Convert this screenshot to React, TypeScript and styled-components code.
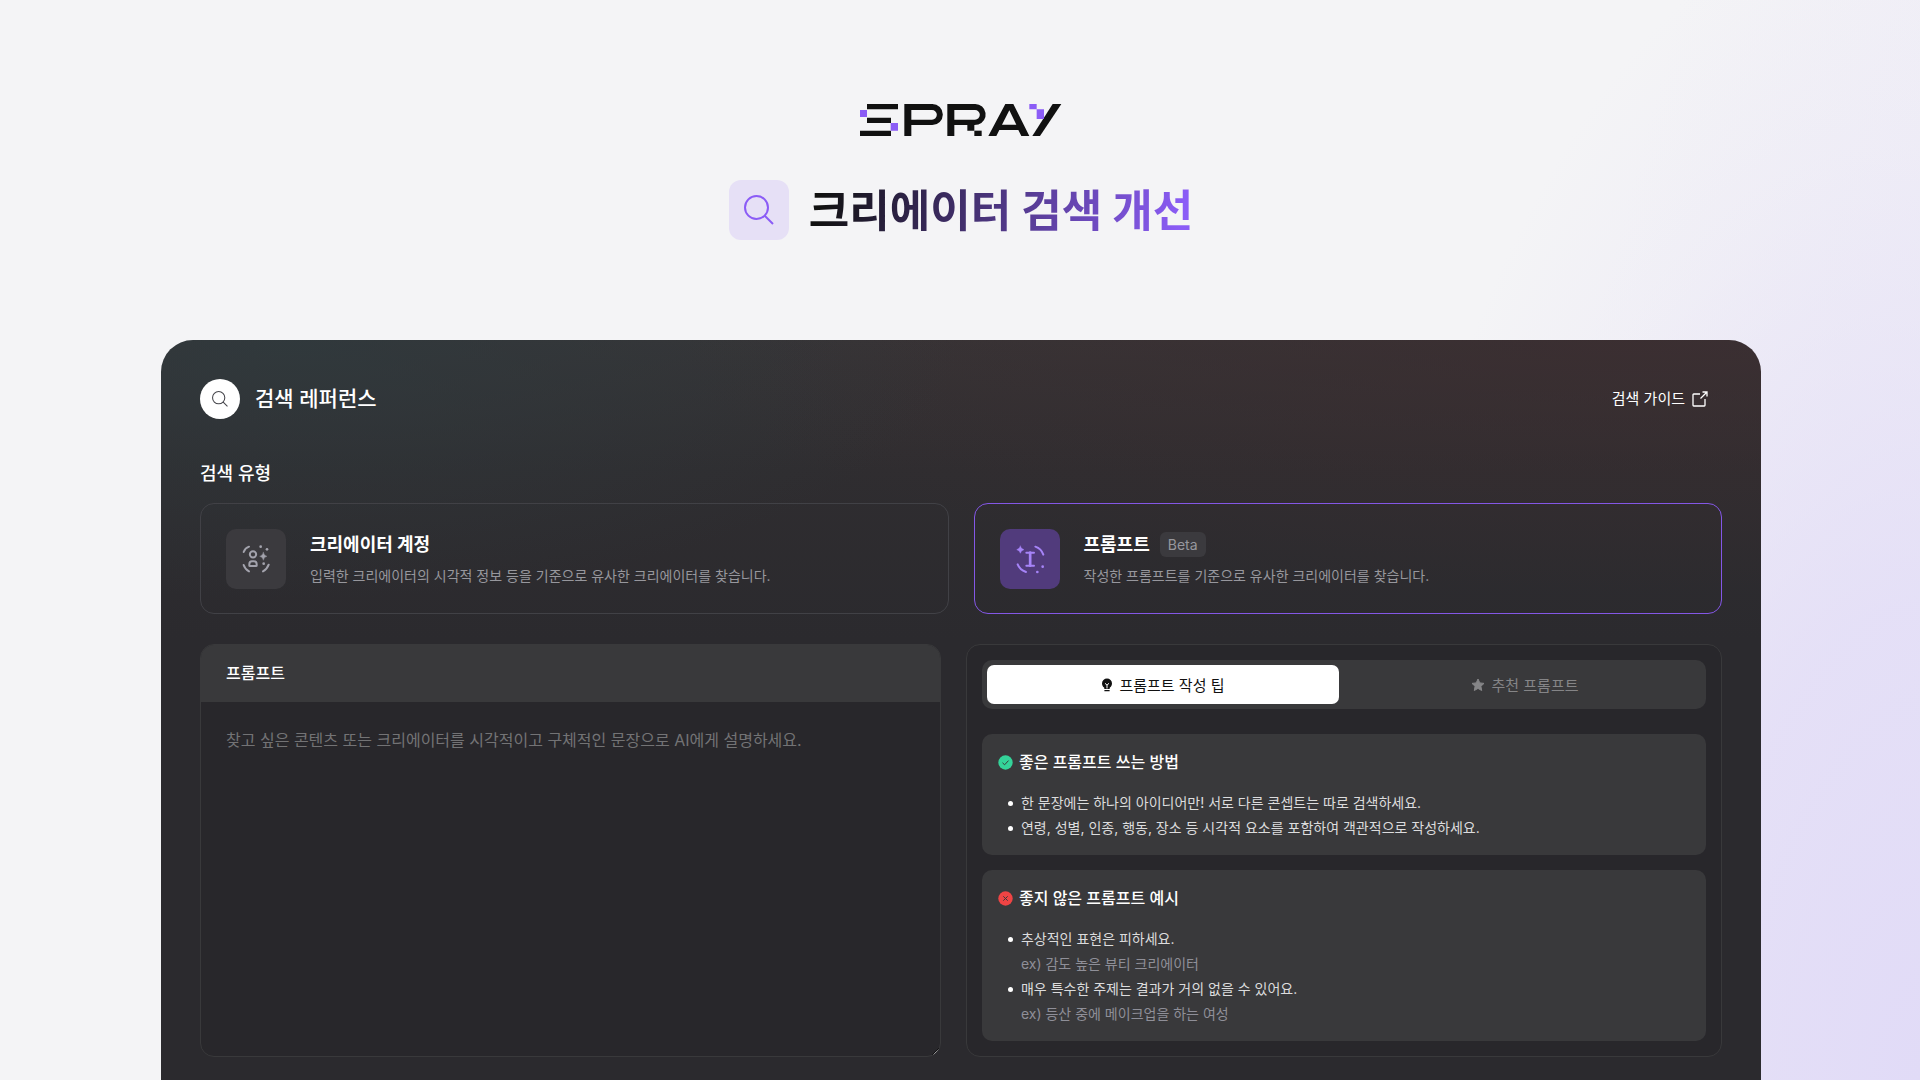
import React, { useState } from "react";
import styled, { createGlobalStyle, css } from "styled-components";

const GlobalStyle = createGlobalStyle`
  *, *::before, *::after { box-sizing: border-box; }
  body {
    margin: 0;
    font-family: Inter, "Noto Sans CJK KR", "Noto Sans", sans-serif;
    color: #fff;
    background: #f4f4f6;
  }
  h1, h2, h3, p, ul { margin: 0; padding: 0; }
  button, textarea { font: inherit; }
`;

const Page = styled.div`
  min-height: 100vh;
  max-height: 100vh;
  overflow: hidden;
  display: flex;
  flex-direction: column;
  padding: 104px 159px 0 161px;
  background:
    radial-gradient(ellipse 30% 110% at 100% 100%, #e1dbf7 0%, rgba(225, 219, 247, 0.75) 40%, rgba(225, 219, 247, 0.2) 78%, rgba(225, 219, 247, 0) 100%),
    linear-gradient(105deg, rgba(232, 227, 248, 0) 76%, rgba(232, 227, 248, 0.45) 100%),
    #f4f4f6;
`;

const Hero = styled.header`
  display: flex;
  flex-direction: column;
  align-items: center;
  gap: 44px;
  padding-bottom: 100px;
`;

const HeroRow = styled.div`
  display: flex;
  align-items: center;
  gap: 20px;
`;

const HeroIcon = styled.span`
  display: grid;
  place-items: center;
  width: 60px;
  height: 60px;
  border-radius: 12px;
  background: #e6e0f6;
  color: #8b5cf6;
`;

const HeroTitle = styled.h1`
  padding-bottom: 4px;
  font-family: "Noto Sans CJK KR", "Noto Sans", sans-serif;
  font-size: 44px;
  line-height: 56px;
  font-weight: 700;
  color: transparent;
  background: linear-gradient(100deg, #111 4%, #8b5cf6 96%);
  background-clip: text;
  -webkit-background-clip: text;
`;

const Card = styled.main`
  flex: 1 0 auto;
  padding: 39px 39px 24px;
  border-radius: 32px 32px 0 0;
  background:
    radial-gradient(ellipse 42% 260px at 8% 0, rgba(46, 58, 62, 0.75), rgba(43, 42, 46, 0)),
    radial-gradient(ellipse 60% 250px at 92% 0, rgba(60, 44, 47, 0.7), rgba(43, 42, 46, 0)),
    linear-gradient(180deg, #373436 0, #2f2d30 130px, #2b2a2e 300px);
`;

const CardHead = styled.div`
  display: flex;
  align-items: center;
  justify-content: space-between;
  height: 40px;
  padding-right: 14px;
`;

const CardTitle = styled.div`
  display: flex;
  align-items: center;
  gap: 15px;
`;

const RoundIcon = styled.span`
  display: grid;
  place-items: center;
  width: 40px;
  height: 40px;
  border-radius: 50%;
  background: #fff;
  color: #46464c;
`;

const H2 = styled.h2`
  font-size: 21px;
  line-height: 32px;
  font-weight: 500;
`;

const GuideLink = styled.a`
  display: flex;
  align-items: center;
  gap: 7px;
  color: #fff;
  font-size: 15px;
  line-height: 24px;
  text-decoration: none;
`;

const SectionLabel = styled.h3`
  margin-top: 40px;
  padding-bottom: 14px;
  font-size: 18px;
  line-height: 30px;
  font-weight: 500;
`;

const TypeGrid = styled.div`
  display: grid;
  grid-template-columns: 1fr 1fr;
  gap: 25px;
`;

const HiddenRadio = styled.input`
  appearance: none;
  position: absolute;
  opacity: 0;
`;

const TypeCard = styled.label<{ $active: boolean }>`
  display: flex;
  align-items: center;
  gap: 24px;
  min-height: 111px;
  padding: 24px 25px;
  border: 1px solid ${(p) => (p.$active ? "#8457e6" : "#414146")};
  border-radius: 14px;
  cursor: pointer;
`;

const TypeIcon = styled.span<{ $active: boolean }>`
  display: grid;
  place-items: center;
  width: 60px;
  height: 60px;
  border-radius: 10px;
  background: ${(p) => (p.$active ? "#513b7c" : "#3b3a3e")};
  color: ${(p) => (p.$active ? "#a684f8" : "#a3a3ad")};
`;

const TypeText = styled.span`
  display: flex;
  flex-direction: column;
  gap: 8px;
`;

const TypeTitle = styled.span`
  display: flex;
  align-items: center;
  gap: 10px;
  font-size: 18px;
  line-height: 26px;
  font-weight: 700;
`;

const TypeDesc = styled.span`
  font-size: 14px;
  line-height: 20px;
  color: #97979d;
`;

const Badge = styled.span`
  padding: 0 8px;
  border-radius: 6px;
  background: #3b3a3e;
  color: #97979d;
  font-size: 14px;
  line-height: 25px;
  font-weight: 400;
`;

const WorkGrid = styled.div`
  display: grid;
  grid-template-columns: 49fr 50fr;
  gap: 25px;
  margin-top: 30px;
`;

const panel = css`
  border: 1px solid #39393b;
  border-radius: 14px;
  background: #28272b;
`;

const Editor = styled.section`
  ${panel}
  display: flex;
  flex-direction: column;
  overflow: hidden;
`;

const EditorLabel = styled.label`
  padding: 16px 25px 17px;
  background: #39393b;
  font-size: 16px;
  line-height: 24px;
  font-weight: 500;
`;

const EditorArea = styled.textarea`
  flex: 1;
  display: block;
  width: 100%;
  padding: 24px 25px;
  border: 0;
  outline: 0;
  resize: vertical;
  background: transparent;
  color: #fff;
  color-scheme: dark;
  font-size: 16px;
  line-height: 28px;
  &::placeholder { color: #737375; opacity: 1; }
`;

const Tips = styled.section`
  ${panel}
  display: flex;
  flex-direction: column;
  gap: 15px;
  padding: 15px;
`;

const TabBar = styled.div`
  display: grid;
  grid-template-columns: 1fr 1fr;
  gap: 10px;
  margin-bottom: 10px;
  padding: 5px;
  border-radius: 10px;
  background: #39393b;
`;

const Tab = styled.button<{ $active: boolean }>`
  display: flex;
  align-items: center;
  justify-content: center;
  gap: 6px;
  height: 39px;
  padding: 0;
  border: 0;
  border-radius: 7px;
  background: ${(p) => (p.$active ? "#fff" : "transparent")};
  color: ${(p) => (p.$active ? "#111" : "#858587")};
  font-size: 15px;
  cursor: pointer;
`;

const TipBox = styled.article`
  padding: 16px 16px 15px;
  border-radius: 10px;
  background: #39393b;
`;

const TipHead = styled.h3`
  display: flex;
  align-items: center;
  gap: 6px;
  font-size: 16px;
  line-height: 25px;
  font-weight: 500;
`;

const TipList = styled.ul`
  margin-top: 15px;
  padding-left: 10px;
  list-style: none;
  font-size: 14px;
  line-height: 25px;
  color: #dcdcdd;
`;

const TipItem = styled.li`
  display: grid;
  grid-template-columns: 5px 1fr;
  column-gap: 8px;

  &::before {
    content: "";
    height: 5px;
    margin-top: 11px;
    border-radius: 50%;
    background: #fff;
  }
`;

const Example = styled.p`
  grid-column: 2;
  color: #8f8f98;
`;

const Logo = () => (
  <svg width="202" height="32" viewBox="0 0 606 96" role="img" aria-label="SPRAY">
    <g fill="#111">
      <path d="M21 0h93v16H21zM21 41h72v16H21zM0 80h93v16H0z" />
      <path fillRule="evenodd" d="M133 0h84a31.500 31.500 0 0 1 0 63h-63v33h-21zM154 18v29h62a14.500 14.500 0 0 0 0-29z" />
      <path fillRule="evenodd" d="M262 0h84a31.500 31.500 0 0 1 9 61.500l-12 1.500v17h-21V63h-39v33h-21zM283 18v29h62a14.500 14.500 0 0 0 0-29z" />
      <path d="M343 80h22v16h-22z" />
      <path fillRule="evenodd" d="M385 96 436 0h24l48 96h-24l-9-18h-57l-9 18zM448 19l-22 43h43z" />
      <path d="M578 0h26l-64 96h-23z" />
    </g>
    <path fill="#8b5cf6" d="M0 18h21v21H0zM92 57h22v23H92zM508 0h22v16h-22zM530 16h22v29h-22z" />
  </svg>
);

const SearchIcon = ({ size, stroke }: { size: number; stroke: number }) => (
  <svg width={size} height={size} viewBox="0 0 30 30" fill="none" stroke="currentColor" strokeWidth={stroke} aria-hidden="true">
    <circle cx="12.500" cy="12.500" r="11.500" />
    <path d="m20.500 20.500 8.500 8.500" />
  </svg>
);

const ExternalIcon = () => (
  <svg width="16" height="16" viewBox="0 0 16 16" fill="none" stroke="currentColor" strokeWidth="1.300" aria-hidden="true">
    <path d="M8 3H1.700a.7.7 0 0 0-.7.7v10.600c0 .4.300.7.7.7h10.600c.4 0 .7-.3.7-.7V8M10.500 1H15v4.500M15 1 8.500 7.500" />
  </svg>
);

const AccountIcon = () => (
  <svg width="30" height="30" viewBox="0 0 90 90" fill="none" stroke="currentColor" strokeWidth="6" strokeLinecap="round" aria-hidden="true">
    <circle cx="36" cy="31" r="9.500" />
    <path d="M25 65v-4q0-9 8-9h6q8 0 8 9v4q0 1-2 1H27q-2 0-2-1z" />
    <path d="M8 24Q12 12 24 8M8 63q4 13 16 19M83 62q-5 14-17 20" />
    <g fill="currentColor" stroke="none">
      <path d="M67 25q2 10 11 12-9 2-11 12-2-10-11-12 9-2 11-12z" stroke="currentColor" strokeWidth="1" />
      <circle cx="59" cy="8" r="4" />
      <circle cx="78" cy="16" r="4" />
      <circle cx="68" cy="59" r="4" />
    </g>
  </svg>
);

const PromptIcon = () => (
  <svg width="30" height="30" viewBox="0 0 90 90" fill="none" stroke="currentColor" strokeWidth="6" strokeLinecap="round" aria-hidden="true">
    <path d="M34 26h23M34 65h23" />
    <path d="M45.500 26v39" strokeWidth="8" />
    <path d="M61 8q18 6 24 24M8 61q6 16 25 23" />
    <g fill="currentColor" stroke="none">
      <path d="M16 6q2 9 11 11-9 2-11 11-2-9-11-11 9-2 11-11z" stroke="currentColor" strokeWidth="1" />
      <circle cx="83" cy="68" r="4" />
      <circle cx="67" cy="84" r="4" />
    </g>
  </svg>
);

const BulbIcon = () => (
  <svg width="12" height="14" viewBox="0 0 12 14" aria-hidden="true">
    <path fill="currentColor" d="M6 .5a5 5 0 0 0-5 5c0 1.900 1 3.300 2.200 4.100v.9c0 .3.200.5.500.5h4.600c.3 0 .5-.2.500-.5v-.9C10 8.800 11 7.400 11 5.500a5 5 0 0 0-5-5zM3.400 12h5.200v1.300H3.400z" />
    <path d="m4 5.300 2 1.800 2-1.800M6 7v3.500" fill="none" stroke="#fff" strokeWidth="1" />
  </svg>
);

const StarIcon = () => (
  <svg width="14" height="14" viewBox="0 0 14 14" aria-hidden="true">
    <path fill="currentColor" stroke="currentColor" strokeLinejoin="round" d="m7 1 1.800 3.900 4.200.5-3.100 2.900.8 4.200L7 10.400l-3.700 2.100.8-4.200L1 5.400l4.200-.5z" />
  </svg>
);

const StatusIcon = ({ good }: { good: boolean }) => (
  <svg width="15" height="15" viewBox="0 0 15 15" aria-hidden="true">
    <circle cx="7.500" cy="7.500" r="7.200" fill={good ? "#34d399" : "#ef4444"} />
    <path
      d={good ? "m4.500 7.800 2.100 2 3.900-4.200" : "m5.300 5.300 4.400 4.400m0-4.400-4.400 4.400"}
      fill="none"
      stroke="#39393b"
      strokeWidth="1"
    />
  </svg>
);

export default function App() {
  const [type, setType] = useState("prompt");
  const [tab, setTab] = useState("tips");
  return (
    <>
      <GlobalStyle />
      <Page>
        <Hero>
          <Logo />
          <HeroRow>
            <HeroIcon>
              <SearchIcon size={30} stroke={2} />
            </HeroIcon>
            <HeroTitle>크리에이터 검색 개선</HeroTitle>
          </HeroRow>
        </Hero>
        <Card>
          <CardHead>
            <CardTitle>
              <RoundIcon>
                <SearchIcon size={16} stroke={2} />
              </RoundIcon>
              <H2>검색 레퍼런스</H2>
            </CardTitle>
            <GuideLink href="#guide">
              검색 가이드
              <ExternalIcon />
            </GuideLink>
          </CardHead>

          <SectionLabel>검색 유형</SectionLabel>
          <TypeGrid role="radiogroup" aria-label="검색 유형">
            <TypeCard $active={type === "account"}>
              <HiddenRadio type="radio" name="type" checked={type === "account"} onChange={() => setType("account")} />
              <TypeIcon $active={type === "account"}>
                <AccountIcon />
              </TypeIcon>
              <TypeText>
                <TypeTitle>크리에이터 계정</TypeTitle>
                <TypeDesc>입력한 크리에이터의 시각적 정보 등을 기준으로 유사한 크리에이터를 찾습니다.</TypeDesc>
              </TypeText>
            </TypeCard>
            <TypeCard $active={type === "prompt"}>
              <HiddenRadio type="radio" name="type" checked={type === "prompt"} onChange={() => setType("prompt")} />
              <TypeIcon $active={type === "prompt"}>
                <PromptIcon />
              </TypeIcon>
              <TypeText>
                <TypeTitle>
                  프롬프트 <Badge>Beta</Badge>
                </TypeTitle>
                <TypeDesc>작성한 프롬프트를 기준으로 유사한 크리에이터를 찾습니다.</TypeDesc>
              </TypeText>
            </TypeCard>
          </TypeGrid>

          <WorkGrid>
            <Editor>
              <EditorLabel htmlFor="prompt">프롬프트</EditorLabel>
              <EditorArea
                id="prompt"
                placeholder="찾고 싶은 콘텐츠 또는 크리에이터를 시각적이고 구체적인 문장으로 AI에게 설명하세요."
              />
            </Editor>
            <Tips>
              <TabBar role="tablist">
                <Tab type="button" role="tab" aria-selected={tab === "tips"} $active={tab === "tips"} onClick={() => setTab("tips")}>
                  <BulbIcon />
                  프롬프트 작성 팁
                </Tab>
                <Tab type="button" role="tab" aria-selected={tab === "picks"} $active={tab === "picks"} onClick={() => setTab("picks")}>
                  <StarIcon />
                  추천 프롬프트
                </Tab>
              </TabBar>
              <TipBox>
                <TipHead>
                  <StatusIcon good />
                  좋은 프롬프트 쓰는 방법
                </TipHead>
                <TipList>
                  <TipItem>한 문장에는 하나의 아이디어만! 서로 다른 콘셉트는 따로 검색하세요.</TipItem>
                  <TipItem>연령, 성별, 인종, 행동, 장소 등 시각적 요소를 포함하여 객관적으로 작성하세요.</TipItem>
                </TipList>
              </TipBox>
              <TipBox>
                <TipHead>
                  <StatusIcon good={false} />
                  좋지 않은 프롬프트 예시
                </TipHead>
                <TipList>
                  <TipItem>
                    추상적인 표현은 피하세요.
                    <Example>ex) 감도 높은 뷰티 크리에이터</Example>
                  </TipItem>
                  <TipItem>
                    매우 특수한 주제는 결과가 거의 없을 수 있어요.
                    <Example>ex) 등산 중에 메이크업을 하는 여성</Example>
                  </TipItem>
                </TipList>
              </TipBox>
            </Tips>
          </WorkGrid>
        </Card>
      </Page>
    </>
  );
}
